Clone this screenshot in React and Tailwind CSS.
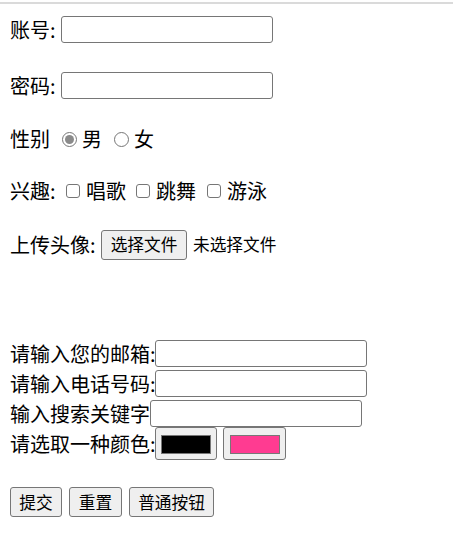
import React from 'react';

const TextBox = ({ className = '' }) => (
  <input
    type="text"
    className={`h-[27px] w-[212px] shrink-0 rounded-[3px] border border-[#767676] bg-white px-1 outline-none ${className}`}
  />
);

const Radio = ({ checked }) => (
  <span className="flex h-[15px] w-[15px] items-center justify-center rounded-full border border-[#767676] bg-white">
    {checked && <span className="h-[9px] w-[9px] rounded-full bg-[#8a8a8a]" />}
  </span>
);

const Checkbox = () => (
  <span className="h-[14px] w-[14px] rounded-[3px] border border-[#767676] bg-white" />
);

const Btn = ({ children, className = '' }) => (
  <button
    type="button"
    className={`flex h-[30px] shrink-0 items-center justify-center whitespace-nowrap rounded-[3px] border border-[#767676] bg-[#efefef] text-[16.7px] text-black ${className}`}
  >
    {children}
  </button>
);

const Swatch = ({ color, className = '' }) => (
  <div
    className={`flex h-[33px] shrink-0 items-center justify-center rounded-[3px] border border-[#767676] bg-[#efefef] pt-[1px] ${className}`}
  >
    <div className={`h-[19px] w-[50px] border border-[#777777] ${color}`} />
  </div>
);

export default function App() {
  return (
    <div className="min-h-[546px] w-[453px] whitespace-nowrap bg-white font-['Noto_Sans_CJK_SC',sans-serif] text-[20px] leading-none text-black">
      <div className="h-[2px]" />
      <div className="h-[2px] bg-[#dadada]" />

      <div className="pl-[10px]">
        {/* 账号 */}
        <div className="mt-[12px] flex h-[27px] items-center">
          <span className="w-[51px] shrink-0">账号:</span>
          <TextBox />
        </div>

        {/* 密码 */}
        <div className="mt-[29px] flex h-[27px] items-center">
          <span className="w-[51px] shrink-0">密码:</span>
          <TextBox />
        </div>

        {/* 性别 */}
        <div className="mt-[26px] flex h-[28px] items-center">
          <span className="w-[52px] shrink-0">性别</span>
          <Radio checked />
          <span className="ml-[5px]">男</span>
          <span className="ml-[12px]"><Radio /></span>
          <span className="ml-[5px]">女</span>
        </div>

        {/* 兴趣 */}
        <div className="mt-[24px] flex h-[28px] items-center">
          <span className="w-[56px] shrink-0">兴趣:</span>
          <Checkbox />
          <span className="ml-[6px]">唱歌</span>
          <span className="ml-[10px] flex"><Checkbox /></span>
          <span className="ml-[6px]">跳舞</span>
          <span className="ml-[11px] flex"><Checkbox /></span>
          <span className="ml-[6px]">游泳</span>
        </div>

        {/* 上传头像 */}
        <div className="mt-[25px] flex h-[29px] items-center">
          <span className="w-[91px] shrink-0">上传头像:</span>
          <Btn className="h-[29px] w-[86px]">选择文件</Btn>
          <span className="ml-[6px] text-[16.7px]">未选择文件</span>
        </div>

        {/* 邮箱 */}
        <div className="mt-[81px] flex h-[27px] items-center">
          <span className="w-[145px] shrink-0">请输入您的邮箱:</span>
          <TextBox />
        </div>

        {/* 电话 */}
        <div className="mt-[3px] flex h-[27px] items-center">
          <span className="w-[145px] shrink-0">请输入电话号码:</span>
          <TextBox />
        </div>

        {/* 搜索 */}
        <div className="mt-[3px] flex h-[27px] items-center">
          <span className="w-[140px] shrink-0">输入搜索关键字</span>
          <TextBox />
        </div>

        {/* 颜色 */}
        <div className="flex h-[33px] items-center">
          <span className="w-[145px] shrink-0">请选取一种颜色:</span>
          <Swatch color="bg-black" className="w-[62px]" />
          <Swatch color="bg-[#ff3b91]" className="ml-[6px] w-[63px]" />
        </div>

        {/* 按钮 */}
        <div className="mt-[27px] flex h-[30px] items-center gap-[7px]">
          <Btn className="w-[52px]">提交</Btn>
          <Btn className="w-[53px]">重置</Btn>
          <Btn className="w-[85px]">普通按钮</Btn>
        </div>
      </div>
    </div>
  );
}
